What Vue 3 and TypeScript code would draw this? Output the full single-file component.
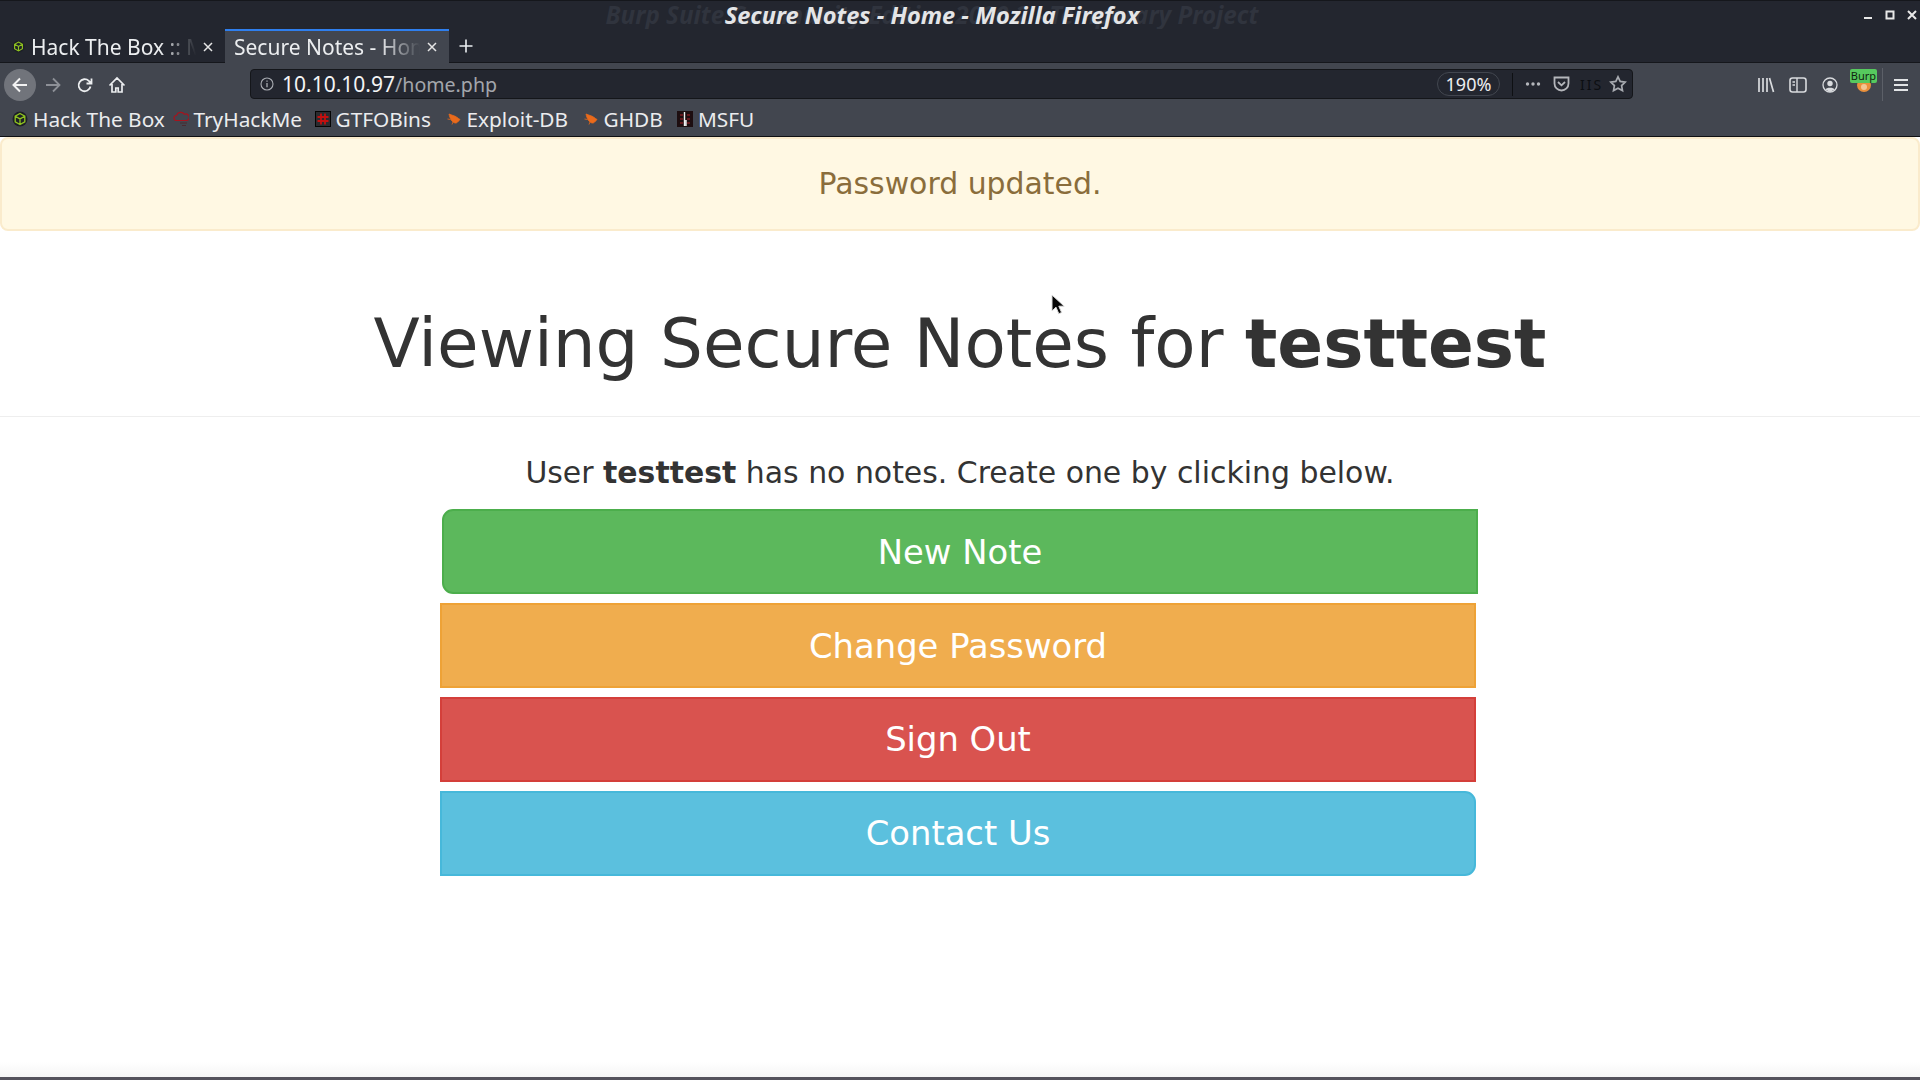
<script setup lang="ts">
interface Bookmark { label: string; icon: string; width: number }
const bookmarks: Bookmark[] = [
  { label: 'Hack The Box', icon: 'htb', width: 160.5 },
  { label: 'TryHackMe', icon: 'thm', width: 142 },
  { label: 'GTFOBins', icon: 'gtfo', width: 131 },
  { label: 'Exploit-DB', icon: 'bug', width: 137 },
  { label: 'GHDB', icon: 'bug', width: 94.5 },
  { label: 'MSFU', icon: 'msf', width: 80 },
]
const actions: { label: string; kind: string }[] = [
  { label: 'New Note', kind: 'success' },
  { label: 'Change Password', kind: 'warning' },
  { label: 'Sign Out', kind: 'danger' },
  { label: 'Contact Us', kind: 'cyan' },
]
</script>

<template>
  <div class="screen">
    <header class="chrome">
      <div class="titlebar">
        <span class="ghost-title">Burp Suite Community Edition 2020.2 - Temporary Project</span>
        <span class="title">Secure Notes - Home - Mozilla Firefox</span>
        <div class="winbtns">
          <svg width="12" height="12" viewBox="0 0 12 12"><rect x="2" y="8" width="8" height="2" fill="#e8e8e8" /></svg>
          <svg width="12" height="12" viewBox="0 0 12 12"><rect x="2.500" y="2.500" width="7" height="7" fill="none" stroke="#e8e8e8" stroke-width="2" /></svg>
          <svg width="12" height="12" viewBox="0 0 12 12"><path d="M2 2l8 8M10 2l-8 8" stroke="#e8e8e8" stroke-width="2" /></svg>
        </div>
      </div>

      <div class="tabstrip">
        <div class="tab">
          <svg class="fav-small" viewBox="0 0 16 16">
            <circle cx="8" cy="8" r="7.500" fill="#1d2027" />
            <path d="M8 2.500l4.800 2.700v5.600L8 13.500l-4.800-2.700V5.200zM3.200 5.200L8 7.900l4.800-2.700M8 7.900v5.600" fill="none" stroke="#8fc31f" stroke-width="1.400" />
          </svg>
          <span class="tab-text">Hack The Box :: Machines</span>
          <svg class="tab-x" viewBox="0 0 12 12"><path d="M2 2l8 8M10 2l-8 8" stroke="#e6e6e6" stroke-width="1.500" /></svg>
        </div>
        <div class="tab active">
          <span class="tab-text">Secure Notes - Home</span>
          <svg class="tab-x" viewBox="0 0 12 12"><path d="M2 2l8 8M10 2l-8 8" stroke="#e6e6e6" stroke-width="1.500" /></svg>
        </div>
        <svg class="plus" viewBox="0 0 16 16"><path d="M8 1.500v13M1.500 8h13" stroke="#eceff2" stroke-width="1.600" /></svg>
      </div>

      <div class="toolbar">
        <div class="nav">
          <div class="back">
            <svg width="20" height="20" viewBox="0 0 20 20"><path d="M17 10H4M10 3.500L3.500 10l6.500 6.500" fill="none" stroke="#f2f2f2" stroke-width="2" /></svg>
          </div>
          <svg class="fwd" width="20" height="20" viewBox="0 0 20 20"><path d="M3 10h13M10 3.500l6.500 6.500-6.500 6.500" fill="none" stroke="#8d9097" stroke-width="1.800" /></svg>
          <svg class="nav-icon" width="18" height="18" viewBox="0 0 18 18"><path d="M14.500 10.500a6 6 0 1 1-1.700-5.600L15 7M15.500 2.500V7.500H10.500" fill="none" stroke="#eceef0" stroke-width="1.800" /></svg>
          <svg class="nav-icon home" width="18" height="18" viewBox="0 0 18 18"><path d="M1.500 9.500L9 2l7.500 7.500M4 8v8h3.800v-4h2.400v4H14V8" fill="none" stroke="#eceef0" stroke-width="1.700" /></svg>
        </div>
        <div class="urlbar">
          <svg class="site-info" width="14" height="14" viewBox="0 0 14 14"><circle cx="7" cy="7" r="6" fill="none" stroke="#a9acb2" stroke-width="1.100" /><path d="M7 6v4.200M7 3.500v1.300" stroke="#a9acb2" stroke-width="1.300" /></svg>
          <span class="url"><span class="host">10.10.10.97</span><span class="path">/home.php</span></span>
          <span class="zoom-pill">190%</span>
          <span class="url-sep"></span>
          <svg class="ua dots" width="16" height="6" viewBox="0 0 16 6"><circle cx="2.500" cy="3" r="1.700" fill="#b4b6bb" /><circle cx="8" cy="3" r="1.700" fill="#b4b6bb" /><circle cx="13.500" cy="3" r="1.700" fill="#b4b6bb" /></svg>
          <svg class="ua pocket" width="17" height="16" viewBox="0 0 17 16"><path d="M1.500 1.500h14v6a7 7 0 0 1-14 0zM5 6l3.500 3.300L12 6" fill="none" stroke="#b4b6bb" stroke-width="1.800" /></svg>
          <span class="iis">IIS</span>
          <svg class="ua star" width="18" height="18" viewBox="0 0 18 18"><path d="M9 1.800l2.200 4.600 5 .7-3.600 3.500.9 5L9 13.200l-4.500 2.400.9-5L1.800 7.100l5-.7z" fill="none" stroke="#a8abb1" stroke-width="1.700" /></svg>
        </div>
        <div class="tools">
          <svg class="t-lib" width="18" height="18" viewBox="0 0 18 18"><path d="M2 2v14M6 2v14M10 2v14M12.500 2L16.500 16" fill="none" stroke="#d9dbde" stroke-width="1.700" /></svg>
          <svg class="t-side" width="18" height="16" viewBox="0 0 18 16"><rect x="1" y="1" width="16" height="14" rx="2.500" fill="none" stroke="#d9dbde" stroke-width="1.600" /><path d="M8 1v14M3.500 5h2.500M3.500 8h2.500" stroke="#d9dbde" stroke-width="1.400" /></svg>
          <svg class="t-prof" width="16" height="16" viewBox="0 0 16 16"><circle cx="8" cy="8" r="7" fill="none" stroke="#d9dbde" stroke-width="1.300" /><circle cx="8" cy="6.500" r="2.700" fill="#d9dbde" /><path d="M3.300 12.500c1-2.500 8.400-2.500 9.400 0L8 15z" fill="#d9dbde" /></svg>
          <div class="burp">
            <svg class="burp-fox" width="16" height="16" viewBox="0 0 16 16"><circle cx="8" cy="8" r="7" fill="#e9903c" /><circle cx="8" cy="10" r="3" fill="#f3c693" /></svg>
            <span class="burp-badge">Burp</span>
          </div>
          <span class="tool-sep"></span>
          <svg class="t-menu" width="16" height="14" viewBox="0 0 16 14"><path d="M1 2h14M1 7h14M1 12h14" stroke="#e2e4e6" stroke-width="2" /></svg>
        </div>
      </div>

      <nav class="bookmarks">
        <div v-for="b in bookmarks" :key="b.label" class="bookmark" :style="{ width: b.width + 'px' }">
          <svg v-if="b.icon === 'htb'" class="bm-icon" viewBox="0 0 16 16">
            <circle cx="8" cy="8" r="7.500" fill="#1d2027" />
            <path d="M8 2.500l4.800 2.700v5.600L8 13.500l-4.800-2.700V5.200zM3.200 5.200L8 7.900l4.800-2.700M8 7.900v5.600" fill="none" stroke="#8fc31f" stroke-width="1.300" />
          </svg>
          <svg v-else-if="b.icon === 'thm'" class="bm-icon" viewBox="0 0 16 16">
            <path d="M3.500 9.500a2.500 2.500 0 0 1 0-5 4.500 4.500 0 0 1 8-1.200 3.200 3.200 0 0 1 2.500 6.200z" fill="none" stroke="#a5141e" stroke-width="1.200" />
            <path d="M7 12h7M9 14.500h4" stroke="#4a2a30" stroke-width="1.200" />
          </svg>
          <svg v-else-if="b.icon === 'gtfo'" class="bm-icon" viewBox="0 0 16 16">
            <rect x="0.500" y="0.500" width="15" height="15" fill="#2b2b2f" stroke="#050505" />
            <path d="M6 2.500v11M10 2.500v11M2.500 6h11M2.500 10h11" stroke="#c40f0f" stroke-width="1.800" />
          </svg>
          <svg v-else-if="b.icon === 'bug'" class="bm-icon" viewBox="0 0 16 16">
            <path d="M3 3l4 1.500c3 .5 5 3 7 4-1.500 1.500-3 4-5 3.500C6 11 4 8 3 3zM1.500 8l3 .5M6 13.500l1-2.500" fill="#ea6a1b" stroke="#ea6a1b" stroke-width=".8" />
          </svg>
          <svg v-else class="bm-icon" viewBox="0 0 16 16">
            <rect width="16" height="16" fill="#1d0e10" />
            <path d="M3 4h3M10 4h3M3 8h3M10 8h3M3 12h3M10 12h3" stroke="#7c1b20" stroke-width="1.500" />
            <path d="M7.500 1v14M9 9v6" stroke="#f1f1f1" stroke-width="1.400" />
          </svg>
          <span class="bm-label">{{ b.label }}</span>
        </div>
      </nav>
    </header>

    <main class="page">
      <div class="alert">Password updated.</div>
      <div class="page-header">
        <h1>Viewing Secure Notes for <strong>testtest</strong></h1>
      </div>
      <p class="lead">User <strong>testtest</strong> has no notes. Create one by clicking below.</p>
      <div class="actions">
        <button v-for="a in actions" :key="a.label" class="btn" :class="a.kind" type="button">{{ a.label }}</button>
      </div>
      <div class="spacer"></div>
      <div class="shade"></div>
    </main>
    <div class="edge"></div>

    <svg class="cursor" width="16" height="22" viewBox="0 0 16 22">
      <path d="M1 1v16l4-3.800 2.800 6.500 2.800-1.200-2.800-6.300h5.400z" fill="#050505" stroke="#dcdcdc" stroke-width="1" />
    </svg>
  </div>
</template>

<style>
html, body { margin: 0; background: #fff; overflow: hidden; }
</style>

<style scoped>
.screen {
  position: relative;
  width: 1920px;
  height: 1080px;
  display: flex;
  flex-direction: column;
  overflow: hidden;
  font-family: "DejaVu Sans", sans-serif;
}
.chrome {
  flex: none;
  font-family: "Noto Sans", sans-serif;
  color: #eceef0;
}
.titlebar {
  position: relative;
  height: 29px;
  background: #23262f;
  border-top: 1px solid #15171c;
  box-sizing: border-box;
  overflow: hidden;
}
.title, .ghost-title {
  position: absolute;
  left: 932px;
  top: 0;
  transform: translateX(-50%);
  white-space: nowrap;
  font-style: italic;
  font-weight: 700;
  line-height: 28px;
}
.title { color: #e4e5e7; font-size: 23.600px; }
.ghost-title { color: #30343e; font-size: 24.200px; }
.winbtns {
  position: absolute;
  right: 2px;
  top: 8px;
  display: flex;
  gap: 10px;
}
.tabstrip {
  height: 34px;
  background: #23262f;
  display: flex;
  align-items: stretch;
  box-shadow: inset 0 -1px 0 #15171c;
}
.tab {
  width: 224px;
  display: flex;
  align-items: center;
  padding: 1px 10px 0 12px;
  box-sizing: border-box;
  font-size: 21px;
}
.tab.active {
  margin-left: 1px;
  background: #42464f;
  border-top: 2px solid #2f7fee;
  padding: 0 11px 1px 9px;
}
.fav-small { width: 13px; height: 13px; flex: none; margin-right: 6px; }
.tab-text {
  flex: 1;
  min-width: 0;
  overflow: hidden;
  white-space: nowrap;
  -webkit-mask-image: linear-gradient(90deg, #000 78%, transparent 100%);
  mask-image: linear-gradient(90deg, #000 78%, transparent 100%);
}
.tab-x { width: 12px; height: 12px; flex: none; margin-left: 6px; }
.plus { width: 16px; height: 16px; align-self: center; margin-left: 9px; }
.toolbar {
  height: 43px;
  background: #42464f;
  display: flex;
  align-items: center;
}
.nav {
  width: 250px;
  flex: none;
  display: flex;
  align-items: center;
  padding-left: 4px;
  box-sizing: border-box;
}
.back {
  width: 32px;
  height: 32px;
  border-radius: 50%;
  background: #71747b;
  display: flex;
  align-items: center;
  justify-content: center;
}
.fwd { margin-left: 7px; }
.nav-icon { margin-left: 13px; }
.home { margin-left: 14px; }
.urlbar {
  width: 1383px;
  height: 30px;
  margin-bottom: 1px;
  flex: none;
  background: #23262f;
  border: 1px solid #14161a;
  border-radius: 4px;
  box-sizing: border-box;
  display: flex;
  align-items: center;
  padding-left: 9px;
}
.site-info { flex: none; }
.url { flex: 1; margin-left: 8px; white-space: nowrap; }
.host { color: #f4f4f5; font-size: 21px; }
.path { color: #a3a6ac; font-size: 19.600px; }
.zoom-pill {
  width: 63px;
  height: 24px;
  line-height: 22px;
  box-sizing: border-box;
  border: 1px solid #42464f;
  border-radius: 12px;
  text-align: center;
  font-size: 18px;
  color: #eceef0;
}
.url-sep { width: 1px; height: 23px; background: #0e1013; margin: 0 12px; }
.ua { flex: none; }
.pocket { margin-left: 12px; }
.iis {
  width: 20px;
  margin-left: 10px;
  text-align: center;
  font-size: 14px;
  letter-spacing: 2px;
  color: #0c0e12;
}
.star { margin-left: 9px; margin-right: 5px; }
.tools { flex: 1; position: relative; height: 100%; display: flex; align-items: center; }
.t-lib { margin-left: 124px; }
.t-side { margin-left: 14px; }
.t-prof { margin-left: 15px; }
.burp { position: relative; width: 16px; height: 16px; margin-left: 18px; }
.burp-fox { display: block; }
.burp-badge {
  position: absolute;
  left: -6px;
  top: -8px;
  width: 27px;
  height: 14px;
  line-height: 14px;
  border-radius: 2px;
  background: #56c95e;
  color: #10240f;
  font-size: 11px;
  text-align: center;
}
.tool-sep { width: 1px; height: 33px; background: #5c6068; margin-left: 10px; }
.t-menu { margin-left: 10px; }
.bookmarks {
  height: 31px;
  background: #42464f;
  border-bottom: 1px solid #0f1013;
  box-sizing: border-box;
  display: flex;
  align-items: center;
  padding: 0 0 5px 12px;
  font-size: 20.800px;
  color: #ebecee;
}
.bookmark { display: flex; align-items: center; flex: none; }
.bm-icon { width: 16px; height: 16px; flex: none; margin-right: 5px; }
.page {
  flex: 1;
  min-height: 0;
  display: flex;
  flex-direction: column;
  background: #fff;
  color: #333;
}
.alert {
  height: 94px;
  box-sizing: border-box;
  background: #fff8e3;
  border: 2px solid #faebcc;
  border-radius: 8px;
  color: #8a6d3b;
  font-size: 29.900px;
  display: flex;
  align-items: center;
  justify-content: center;
  padding-bottom: 2px;
}
.page-header {
  height: 186px;
  box-sizing: border-box;
  border-bottom: 1px solid #eee;
  display: flex;
  align-items: center;
  justify-content: center;
  padding-top: 42px;
}
h1 {
  margin: 0;
  font-size: 67.600px;
  font-weight: 400;
  line-height: 1.1;
  color: #333;
}
.lead {
  margin: 0;
  height: 92px;
  line-height: 112px;
  text-align: center;
  font-size: 29.900px;
  color: #333;
}
.actions {
  width: 1040px;
  margin: 0 auto;
  display: flex;
  flex-direction: column;
  align-items: flex-start;
  gap: 9px;
}
.btn {
  width: 1036px;
  height: 85px;
  box-sizing: border-box;
  border-width: 2px;
  border-style: solid;
  border-radius: 0;
  color: #fff;
  font-family: "DejaVu Sans", sans-serif;
  font-size: 33.800px;
  padding: 2px 0 0;
}
.success { background: #5cb85c; border-color: #4cae4c; margin-left: 2px; border-radius: 11px 0 0 11px; }
.warning { background: #f0ad4e; border-color: #eea236; }
.danger { background: #d9534f; border-color: #d43f3a; padding: 0; }
.cyan { background: #5bc0de; border-color: #46b8da; border-radius: 0 11px 11px 0; padding: 0; }
.spacer { flex: 1; }
.shade {
  height: 15px;
  background: linear-gradient(#fff, #f5f5f5);
}
.edge { flex: none; height: 3px; background: #54525c; }
.cursor {
  position: absolute;
  left: 1051px;
  top: 294px;
}
</style>
